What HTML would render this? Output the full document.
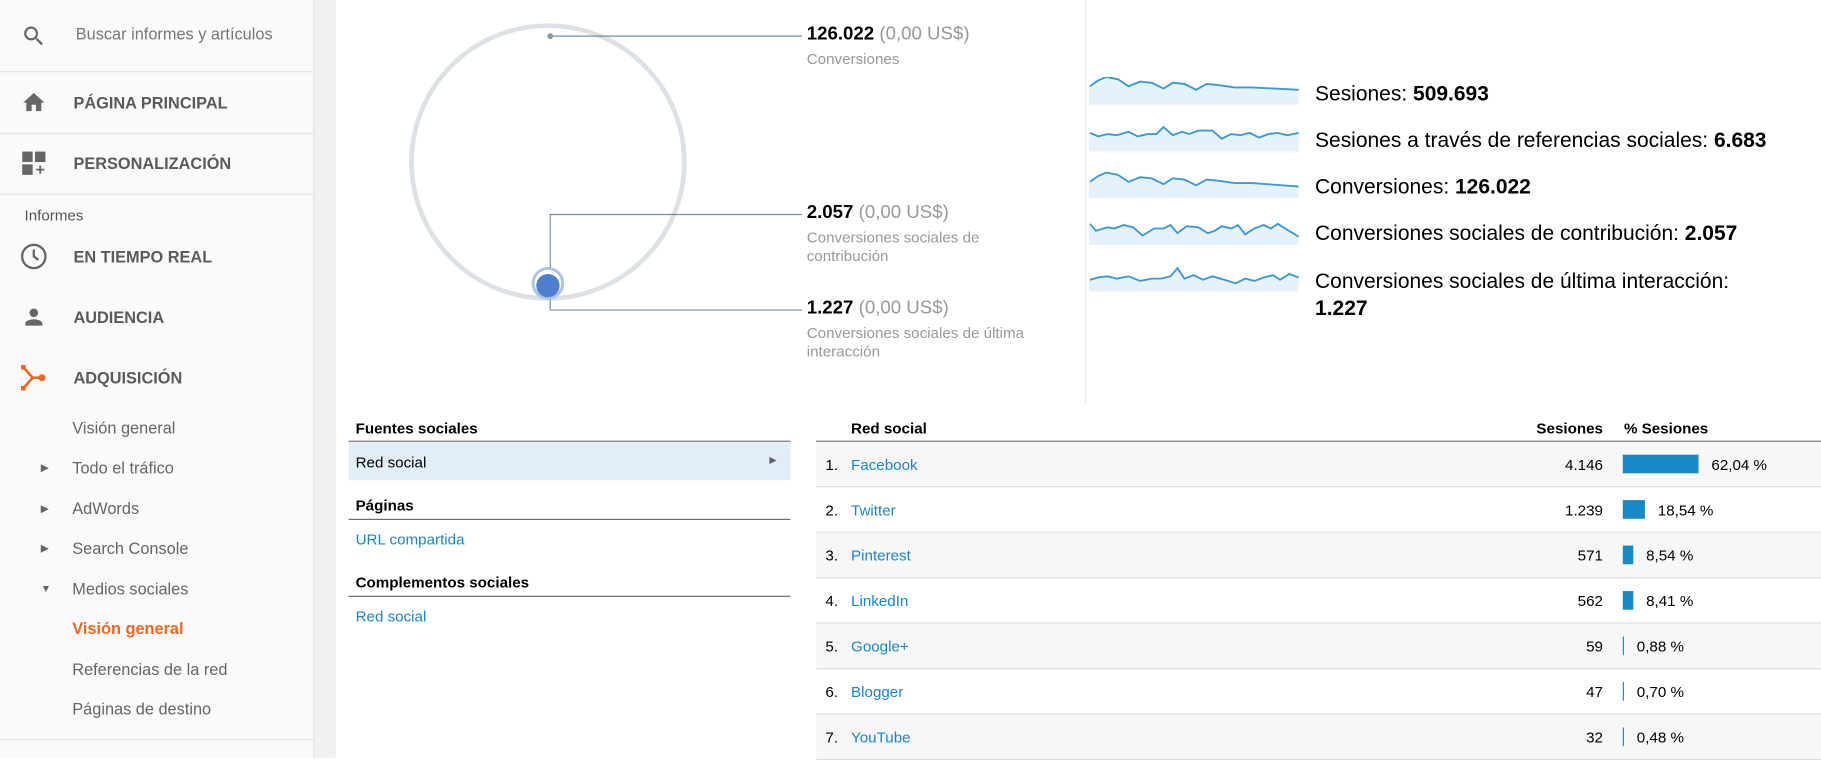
<!DOCTYPE html>
<html><head><meta charset="utf-8"><style>
*{margin:0;padding:0;box-sizing:border-box}
body{width:1821px;height:756px;overflow:hidden;background:#fff;font-family:"Liberation Sans",Arial,sans-serif}
#w{position:absolute;left:0;top:0;width:1562px;height:650px;transform:scale(1.1658);transform-origin:0 0}
.a{position:absolute;white-space:nowrap}
#side{position:absolute;left:0;top:0;width:270px;height:650px;background:#fafafa;border-right:1px solid #ddd}
#strip{position:absolute;left:270px;top:0;width:18px;height:650px;background:#f1f1f1}
.sep{position:absolute;left:0;width:269px;height:1px;background:#e3e3e3}
.cap{font-size:14px;color:#5a5a5a;font-weight:bold;left:63px}
.sub{font-size:14px;color:#666;left:62px}
.tri{font-size:9px;color:#666;left:35px}
.g{color:#999}
.lk{color:#1a85c6}
.row{position:absolute;left:700px;width:862px;height:39px;border-bottom:1px solid #ddd;font-size:13px}
.row span{position:absolute;top:12px}
.sp{position:absolute;left:934px}
.sp .f{fill:#e6f1fa}
.sp .l{fill:none;stroke:#3a9ad3;stroke-width:1.6}
</style></head><body><div id="w">
<div id="side"></div><div id="strip"></div>
<svg class="a" style="left:18px;top:20px" width="22" height="22" viewBox="0 0 24 24"><path fill="#666" d="M15.5 14h-.8l-.3-.3A6.5 6.5 0 1 0 9.5 16a6.5 6.5 0 0 0 4.2-1.6l.3.3v.8l5 5 1.5-1.5-5-5zm-6 0A4.5 4.5 0 1 1 14 9.5 4.5 4.5 0 0 1 9.5 14z"/></svg>
<div class="a" style="left:65px;top:21px;font-size:14px;color:#777">Buscar informes y artículos</div>
<div class="sep" style="top:61px"></div>
<svg class="a" style="left:18px;top:77px" width="22" height="22" viewBox="0 0 24 24"><path fill="#666" d="M10 20v-6h4v6h5v-8h3L12 3 2 12h3v8z"/></svg>
<div class="a cap" style="top:80px">PÁGINA PRINCIPAL</div>
<div class="sep" style="top:114px"></div>
<svg class="a" style="left:19px;top:130px" width="22" height="22" viewBox="0 0 22 22"><rect x="0" y="0" width="9" height="9" fill="#666"/><rect x="11" y="0" width="9" height="9" fill="#666"/><rect x="0" y="11" width="9" height="9" fill="#666"/><path d="M15.5 12v7M12 15.5h7" stroke="#666" stroke-width="1.5"/></svg>
<div class="a cap" style="top:132px">PERSONALIZACIÓN</div>
<div class="sep" style="top:166px"></div>
<div class="a" style="left:21px;top:177px;font-size:13px;color:#555">Informes</div>
<svg class="a" style="left:17px;top:208px" width="24" height="24" viewBox="0 0 24 24"><circle cx="12" cy="12" r="10" fill="none" stroke="#666" stroke-width="2"/><path d="M12 6v6l4 3" fill="none" stroke="#666" stroke-width="2"/></svg>
<div class="a cap" style="top:212px">EN TIEMPO REAL</div>
<svg class="a" style="left:18px;top:261px" width="22" height="22" viewBox="0 0 24 24"><path fill="#666" d="M12 12a4 4 0 1 0-4-4 4 4 0 0 0 4 4zm0 2c-2.7 0-8 1.3-8 4v2h16v-2c0-2.7-5.3-4-8-4z"/></svg>
<div class="a cap" style="top:264px">AUDIENCIA</div>
<svg class="a" style="left:18px;top:313px" width="22" height="22" viewBox="0 0 22 22"><path d="M2 2l8 9-8 9M10 11h7" fill="none" stroke="#f26522" stroke-width="2.2"/><rect x="0" y="0" width="4" height="4" fill="#f26522"/><rect x="0" y="18" width="4" height="4" fill="#f26522"/><circle cx="18" cy="11" r="3" fill="#f26522"/></svg>
<div class="a cap" style="top:316px">ADQUISICIÓN</div>
<div class="a sub" style="top:359px">Visión general</div>
<div class="a tri" style="top:396px">▶</div><div class="a sub" style="top:393px">Todo el tráfico</div>
<div class="a tri" style="top:431px">▶</div><div class="a sub" style="top:428px">AdWords</div>
<div class="a tri" style="top:465px">▶</div><div class="a sub" style="top:462px">Search Console</div>
<div class="a tri" style="top:500px">▼</div><div class="a sub" style="top:497px">Medios sociales</div>
<div class="a sub" style="top:531px;color:#f26522;font-weight:bold">Visión general</div>
<div class="a sub" style="top:566px">Referencias de la red</div>
<div class="a sub" style="top:600px">Páginas de destino</div>
<div class="sep" style="top:634px"></div>

<svg class="a" style="left:286px;top:0" width="644" height="346">
<circle cx="184" cy="139" r="117" fill="none" stroke="#dde1e5" stroke-width="4"/>
<g stroke="#7b8d9d" stroke-width="1" fill="none"><path d="M186 31H402M186 243V184H402M186 243V266H402"/></g>
<circle cx="186" cy="31" r="2.5" fill="#8a9aa8"/>
<circle cx="184" cy="243" r="14" fill="#a9c3ea"/><circle cx="184" cy="243" r="11.5" fill="#fff"/><circle cx="184" cy="245" r="10" fill="#4d7fcc"/>
</svg>
<div class="a" style="left:692px;top:21px;font-size:16px"><b>126.022</b> <span class="g">(0,00 US$)</span></div>
<div class="a g" style="left:692px;top:43px;font-size:13px">Conversiones</div>
<div class="a" style="left:692px;top:174px;font-size:16px"><b>2.057</b> <span class="g">(0,00 US$)</span></div>
<div class="a g" style="left:692px;top:196px;font-size:13px;line-height:16px;white-space:normal;width:200px">Conversiones sociales de contribución</div>
<div class="a" style="left:692px;top:256px;font-size:16px"><b>1.227</b> <span class="g">(0,00 US$)</span></div>
<div class="a g" style="left:692px;top:278px;font-size:13px;line-height:16px;white-space:normal;width:220px">Conversiones sociales de última interacción</div>
<div class="a" style="left:931px;top:0;width:1px;height:346px;background:#e5e5e5"></div>

<svg class="sp" style="top:66px" width="182" height="24"><path class="f" d="M0 8L8 3 15 0 25 2 34 8 44 4 54 5 64 10 72 5 82 6 92 11 101 6 111 7 125 9 140 9 180 11V24H0z"/><path class="l" d="M1 8L8 3 15 0 25 2 34 8 44 4 54 5 64 10 72 5 82 6 92 11 101 6 111 7 125 9 140 9 180 11"/></svg>
<svg class="sp" style="top:106px" width="182" height="24"><path class="f" d="M0 8L8 11 16 9 24 10 34 7 42 11 50 9 58 9 64 3 72 10 80 7 86 9 94 6 106 6 114 13 122 9 130 10 138 8 146 12 154 9 162 8 170 10 180 8V24H0z"/><path class="l" d="M1 8L8 11 16 9 24 10 34 7 42 11 50 9 58 9 64 3 72 10 80 7 86 9 94 6 106 6 114 13 122 9 130 10 138 8 146 12 154 9 162 8 170 10 180 8"/></svg>
<svg class="sp" style="top:146px" width="182" height="24"><path class="f" d="M0 10L8 5 15 2 25 4 34 10 44 6 54 7 64 12 72 7 82 8 92 13 101 8 111 9 125 11 140 11 180 14V24H0z"/><path class="l" d="M1 10L8 5 15 2 25 4 34 10 44 6 54 7 64 12 72 7 82 8 92 13 101 8 111 9 125 11 140 11 180 14"/></svg>
<svg class="sp" style="top:186px" width="182" height="24"><path class="f" d="M0 6L6 12 16 9 22 10 30 7 38 9 46 16 56 10 64 10 70 7 76 14 84 8 94 9 102 14 108 12 114 8 122 10 128 7 134 15 142 10 150 7 156 10 162 6 170 11 180 17V24H0z"/><path class="l" d="M1 6L6 12 16 9 22 10 30 7 38 9 46 16 56 10 64 10 70 7 76 14 84 8 94 9 102 14 108 12 114 8 122 10 128 7 134 15 142 10 150 7 156 10 162 6 170 11 180 17"/></svg>
<svg class="sp" style="top:226px" width="182" height="24"><path class="f" d="M0 14L8 12 16 11 24 13 34 11 44 15 54 13 62 13 70 11 76 4 82 13 90 10 98 14 106 11 116 14 126 17 134 13 142 15 150 12 158 10 164 14 172 9 180 12V24H0z"/><path class="l" d="M1 14L8 12 16 11 24 13 34 11 44 15 54 13 62 13 70 11 76 4 82 13 90 10 98 14 106 11 116 14 126 17 134 13 142 15 150 12 158 10 164 14 172 9 180 12"/></svg>

<div class="a" style="left:1128px;top:70px;font-size:18px">Sesiones: <b>509.693</b></div>
<div class="a" style="left:1128px;top:110px;font-size:18px">Sesiones a través de referencias sociales: <b>6.683</b></div>
<div class="a" style="left:1128px;top:150px;font-size:18px">Conversiones: <b>126.022</b></div>
<div class="a" style="left:1128px;top:190px;font-size:18px">Conversiones sociales de contribución: <b>2.057</b></div>
<div class="a" style="left:1128px;top:230px;font-size:18px;line-height:23px">Conversiones sociales de última interacción:<br><b>1.227</b></div>

<div class="a" style="left:305px;top:360px;font-size:13px;font-weight:bold">Fuentes sociales</div>
<div class="a" style="left:299px;top:378px;width:379px;height:1px;background:#666"></div>
<div class="a" style="left:299px;top:379px;width:379px;height:33px;background:#e1eef6"></div>
<div class="a" style="left:305px;top:389px;font-size:13px">Red social</div>
<div class="a" style="left:660px;top:390px;font-size:8px;color:#666">▶</div>
<div class="a" style="left:305px;top:426px;font-size:13px;font-weight:bold">Páginas</div>
<div class="a" style="left:299px;top:445px;width:379px;height:1px;background:#666"></div>
<div class="a lk" style="left:305px;top:455px;font-size:13px">URL compartida</div>
<div class="a" style="left:305px;top:492px;font-size:13px;font-weight:bold">Complementos sociales</div>
<div class="a" style="left:299px;top:511px;width:379px;height:1px;background:#666"></div>
<div class="a lk" style="left:305px;top:521px;font-size:13px">Red social</div>

<div class="a" style="left:730px;top:360px;font-size:13px;font-weight:bold">Red social</div>
<div class="a" style="left:1275px;width:100px;text-align:right;top:360px;font-size:13px;font-weight:bold">Sesiones</div>
<div class="a" style="left:1393px;top:360px;font-size:13px;font-weight:bold">% Sesiones</div>
<div class="a" style="left:700px;top:378px;width:862px;height:1px;background:#666"></div>

<div class="row" style="top:379px;background:#f7f7f7"><span style="left:8px">1.</span><span class="lk" style="left:30px">Facebook</span><span style="right:187px">4.146</span><span style="left:692px;top:11px;width:65px;height:16px;background:#1a8ac6"></span><span style="left:768px">62,04 %</span></div>
<div class="row" style="top:418px"><span style="left:8px">2.</span><span class="lk" style="left:30px">Twitter</span><span style="right:187px">1.239</span><span style="left:692px;top:11px;width:19px;height:16px;background:#1a8ac6"></span><span style="left:722px">18,54 %</span></div>
<div class="row" style="top:457px;background:#f7f7f7"><span style="left:8px">3.</span><span class="lk" style="left:30px">Pinterest</span><span style="right:187px">571</span><span style="left:692px;top:11px;width:9px;height:16px;background:#1a8ac6"></span><span style="left:712px">8,54 %</span></div>
<div class="row" style="top:496px"><span style="left:8px">4.</span><span class="lk" style="left:30px">LinkedIn</span><span style="right:187px">562</span><span style="left:692px;top:11px;width:9px;height:16px;background:#1a8ac6"></span><span style="left:712px">8,41 %</span></div>
<div class="row" style="top:535px;background:#f7f7f7"><span style="left:8px">5.</span><span class="lk" style="left:30px">Google+</span><span style="right:187px">59</span><span style="left:692px;top:11px;width:1px;height:16px;background:#1a8ac6"></span><span style="left:704px">0,88 %</span></div>
<div class="row" style="top:574px"><span style="left:8px">6.</span><span class="lk" style="left:30px">Blogger</span><span style="right:187px">47</span><span style="left:692px;top:11px;width:1px;height:16px;background:#1a8ac6"></span><span style="left:704px">0,70 %</span></div>
<div class="row" style="top:613px;background:#f7f7f7"><span style="left:8px">7.</span><span class="lk" style="left:30px">YouTube</span><span style="right:187px">32</span><span style="left:692px;top:11px;width:1px;height:16px;background:#1a8ac6"></span><span style="left:704px">0,48 %</span></div>
</div></body></html>
